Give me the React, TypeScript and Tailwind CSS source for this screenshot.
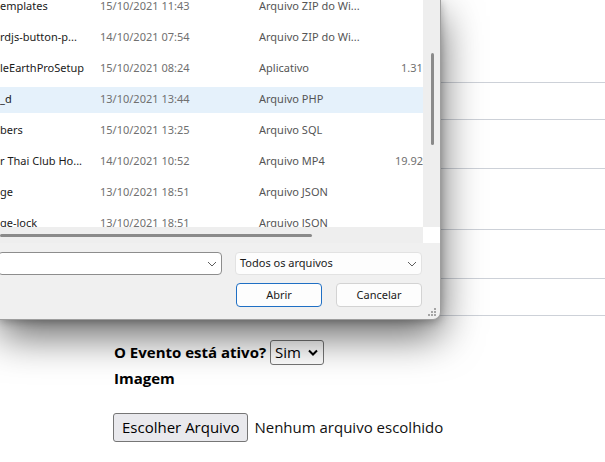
import React from "react";

const files = [
  { name: "emplates", date: "15/10/2021 11:43", type: "Arquivo ZIP do Wi...", size: "1 KB" },
  { name: "rdjs-button-p...", date: "14/10/2021 07:54", type: "Arquivo ZIP do Wi...", size: "1 KB" },
  { name: "leEarthProSetup", date: "15/10/2021 08:24", type: "Aplicativo", size: "1.310 KB" },
  { name: "_d", date: "13/10/2021 13:44", type: "Arquivo PHP", size: "1 KB", sel: true },
  { name: "bers", date: "15/10/2021 13:25", type: "Arquivo SQL", size: "1 KB" },
  { name: "r Thai Club Ho...", date: "14/10/2021 10:52", type: "Arquivo MP4", size: "19.924 KB" },
  { name: "ge", date: "13/10/2021 18:51", type: "Arquivo JSON", size: "" },
  { name: "ge-lock", date: "13/10/2021 18:51", type: "Arquivo JSON", size: "2 KB" },
];

function Chevron({ className }: { className?: string }) {
  return (
    <svg width="10" height="6" viewBox="0 0 10 6" className={className}>
      <path d="M1 1 L5 5 L9 1" fill="none" stroke="#5f5f5f" strokeWidth="1" />
    </svg>
  );
}

export default function App() {
  return (
    <div className="relative w-[605px] h-[462px] overflow-hidden bg-white">
      {/* page background table lines */}
      <div className="flex flex-col">
        <div className="h-[83px] border-b border-[#cdd1d8]" />
        <div className="h-[37px] border-b border-[#cdd1d8]" />
        <div className="h-[49px] border-b border-[#cdd1d8]" />
        <div className="h-[61px] border-b border-[#cdd1d8]" />
        <div className="h-[49px] border-b border-[#cdd1d8]" />
        <div className="h-[37px] border-b border-[#cdd1d8]" />
      </div>

      {/* form */}
      <div
        className="pl-[113px] pt-[24px] text-[15px] text-black"
        style={{ fontFamily: '"Open Sans", "Noto Sans", sans-serif' }}
      >
        <div className="flex items-center h-[25px]">
          <span className="font-bold ml-[1px]">O Evento está ativo?</span>
          <div className="ml-[4px] flex items-center h-[25px] w-[54px] border border-[#767676] rounded-[3px] bg-white pl-[4px]">
            <span>Sim</span>
            <svg width="10" height="7" viewBox="0 0 10 7" className="ml-auto mr-[5px]">
              <path d="M1 1.5 L5 5.5 L9 1.5" fill="none" stroke="#000" strokeWidth="2" />
            </svg>
          </div>
        </div>
        <div className="font-bold h-[24px] leading-[24px] mt-[1px] ml-[1px]">Imagem</div>
        <div className="flex items-center mt-[23px]">
          <div className="h-[29px] px-[8px] flex items-center bg-[#e9e9ed] border border-[#767676] rounded-[3px]">
            Escolher Arquivo
          </div>
          <span className="ml-[6px] text-[#111]">Nenhum arquivo escolhido</span>
        </div>
      </div>

      {/* file dialog window */}
      <div
        className="absolute left-0 top-0 w-[441px] h-[320px] bg-[#f0f0f0] border-r border-b border-[#9e9e9e] rounded-br-[8px] shadow-[0_16px_40px_rgba(0,0,0,0.6),0_2px_8px_rgba(0,0,0,0.25)] text-[11px]"
        style={{ fontFamily: '"Noto Sans", "Open Sans", sans-serif' }}
      >
        <div className="flex h-[227px]">
          <div className="w-[423px] h-full bg-white overflow-hidden">
            <div className="w-[455px] -mt-[9px]">
              {files.map((f, i) => (
                <div key={i} className="h-[31px] flex items-center">
                  <div
                    className={`h-[26px] w-full flex items-center ${f.sel ? "bg-[#e5f1fb]" : ""}`}
                  >
                    <span className="w-[100px] text-[#1a1a1a] whitespace-nowrap">{f.name}</span>
                    <span className="w-[159px] text-[#707070] whitespace-nowrap">{f.date}</span>
                    <span className="w-[136px] text-[#555555] whitespace-nowrap">{f.type}</span>
                    <span className="w-[51px] text-right text-[#707070] whitespace-nowrap">{f.size}</span>
                  </div>
                </div>
              ))}
            </div>
          </div>
          <div className="w-[17px] h-full bg-[#eeeeee] pt-[53px] pl-[8px]">
            <div className="w-[3px] h-[92px] rounded-full bg-[#8a8a8a]" />
          </div>
        </div>
        <div className="flex h-[16px]">
          <div className="w-[423px] bg-[#eeeeee] pt-[7px]">
            <div className="w-[312px] h-[3px] rounded-full bg-[#8a8a8a]" />
          </div>
          <div className="w-[17px] bg-white" />
        </div>

        <div className="pt-[9px]">
          <div className="flex h-[23px]">
            <div className="-ml-[2px] w-[224px] h-full border border-[#8d8d8d] rounded-[4px] bg-white flex items-center justify-end pr-[4px]">
              <Chevron />
            </div>
            <div className="ml-[13px] w-[187px] h-full border border-[#e2e2e2] rounded-[4px] bg-[#fdfdfd] flex items-center pl-[4px] pr-[4px] text-[#1a1a1a]">
              <span>Todos os arquivos</span>
              <Chevron className="ml-auto" />
            </div>
          </div>
          <div className="flex mt-[8px] pl-[236px]">
            <div className="w-[86px] h-[24px] border border-[#1f6fc4] rounded-[4px] bg-[#fdfdfd] flex items-center justify-center text-[#1a1a1a]">
              Abrir
            </div>
            <div className="ml-[14px] w-[86px] h-[24px] border border-[#d3d3d3] rounded-[4px] bg-[#fdfdfd] flex items-center justify-center text-[#1a1a1a]">
              Cancelar
            </div>
          </div>
        </div>

        <svg width="10" height="10" viewBox="0 0 10 10" className="absolute right-[3px] bottom-[2px]">
          <rect x="7" y="1" width="2" height="2" fill="#a5a5a5" />
          <rect x="4" y="4" width="2" height="2" fill="#a5a5a5" />
          <rect x="7" y="4" width="2" height="2" fill="#a5a5a5" />
          <rect x="1" y="7" width="2" height="2" fill="#a5a5a5" />
          <rect x="4" y="7" width="2" height="2" fill="#a5a5a5" />
          <rect x="7" y="7" width="2" height="2" fill="#a5a5a5" />
        </svg>
      </div>
    </div>
  );
}
